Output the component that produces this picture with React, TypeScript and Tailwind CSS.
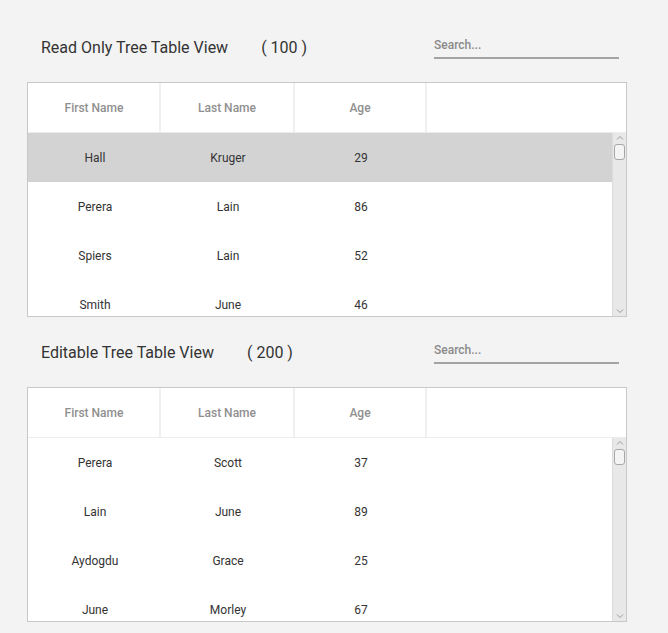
import React from "react";

type Person = { first: string; last: string; age: number };

const readOnlyRows: Person[] = [
  { first: "Hall", last: "Kruger", age: 29 },
  { first: "Perera", last: "Lain", age: 86 },
  { first: "Spiers", last: "Lain", age: 52 },
  { first: "Smith", last: "June", age: 46 },
];

const editableRows: Person[] = [
  { first: "Perera", last: "Scott", age: 37 },
  { first: "Lain", last: "June", age: 89 },
  { first: "Aydogdu", last: "Grace", age: 25 },
  { first: "June", last: "Morley", age: 67 },
];

function ScrollBar() {
  return (
    <div className="w-[14px] h-full bg-[#e8e8e8] border-l border-[#dcdcdc] flex flex-col items-center">
      <svg width="10" height="8" viewBox="0 0 10 8" className="mt-[1px]">
        <path d="M2 5.5 L5 2.5 L8 5.5" fill="none" stroke="#9a9a9a" strokeWidth="1" />
      </svg>
      <div className="w-[11px] h-[16px] mt-[2px] rounded-[3px] border border-[#a8a8a8] bg-[#f4f4f4]" />
      <div className="flex-1" />
      <svg width="10" height="8" viewBox="0 0 10 8" className="mb-[1px]">
        <path d="M2 2.5 L5 5.5 L8 2.5" fill="none" stroke="#9a9a9a" strokeWidth="1" />
      </svg>
    </div>
  );
}

function TreeTable({ rows, selected }: { rows: Person[]; selected?: number }) {
  return (
    <div className="mx-[27px] w-[600px] h-[235px] border border-[#c8c8c8] bg-white flex flex-col">
      <div className="h-[50px] flex border-b border-[#ececec] text-[12px] font-medium text-[#8f8f8f]">
        <div className="w-[133px] flex items-center justify-center border-r-2 border-[#f0f0f0] pl-[1px]">First Name</div>
        <div className="w-[134px] flex items-center justify-center border-r-2 border-[#f0f0f0]">Last Name</div>
        <div className="w-[132px] flex items-center justify-center border-r-2 border-[#f0f0f0]">Age</div>
        <div className="flex-1" />
      </div>
      <div className="flex-1 flex overflow-hidden">
        <div className="flex-1 overflow-hidden">
          {rows.map((r, i) => (
            <div
              key={i}
              className={
                "h-[49px] flex items-center text-[12px] text-[#333333] " +
                (i === selected ? "bg-[#d3d3d3]" : "bg-white")
              }
            >
              <div className="w-[133px] text-center pl-[1px]">{r.first}</div>
              <div className="w-[134px] text-center">{r.last}</div>
              <div className="w-[132px] text-center">{r.age}</div>
            </div>
          ))}
        </div>
        <ScrollBar />
      </div>
    </div>
  );
}

function Section({ title, count, rows, selected }: { title: string; count: number; rows: Person[]; selected?: number }) {
  return (
    <div>
      <div className="h-[70px] flex items-center pt-[2px] pl-[41px] pr-[49px]">
        <span className="text-[16px] text-[#333333]">{title}</span>
        <span className="ml-[33px] text-[16px] text-[#333333]">( {count} )</span>
        <div className="flex-1" />
        <div className="w-[185px] h-[28px] border-b-2 border-[#a3a3a3] flex items-end pb-[3px] mb-[6px]">
          <input
            placeholder="Search..."
            className="w-full bg-transparent outline-none text-[12px] font-medium text-[#333] placeholder:text-[#8a8a8a]"
          />
        </div>
      </div>
      <TreeTable rows={rows} selected={selected} />
    </div>
  );
}

export default function App() {
  return (
    <div className="w-[668px] h-[633px] bg-[#f3f3f3] pt-[12px] font-['Roboto',sans-serif] overflow-hidden">
      <Section title="Read Only Tree Table View" count={100} rows={readOnlyRows} selected={0} />
      <Section title="Editable Tree Table View" count={200} rows={editableRows} />
    </div>
  );
}
